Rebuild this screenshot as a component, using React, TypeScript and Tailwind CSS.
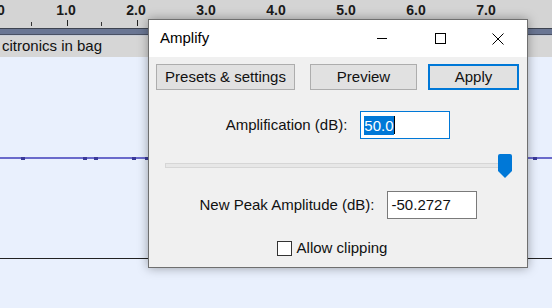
import React from 'react';

const font = { fontFamily: '"Liberation Sans", Arial, sans-serif' };

const rulerLabels = ['0', '1.0', '2.0', '3.0', '4.0', '5.0', '6.0', '7.0'];
const waveDots = [21, 83, 94, 132, 145, 533];

function Ruler() {
  return (
    <div className="h-[28px] bg-[#d4d4d4] overflow-hidden">
      <div className="flex ml-[-39px]">
        {rulerLabels.map((label, i) => (
          <div key={label} className="relative w-[70px] shrink-0 h-[28px] flex flex-col items-center">
            <span
              className={`mt-[3px] text-[14px] font-bold leading-[15px] text-[#1a1a1a] ${i === 0 ? 'ml-[10px]' : ''}`}
            >
              {label}
            </span>
            <div className="mt-auto mb-[2px] ml-[3px] w-px h-[6px] bg-[#222]" />
            <div className="absolute left-0 bottom-[2px] w-px h-[4px] bg-[#333]" />
          </div>
        ))}
        <div className="relative w-[70px] shrink-0 h-[28px]">
          <div className="absolute left-0 bottom-[2px] w-px h-[4px] bg-[#333]" />
        </div>
      </div>
    </div>
  );
}

function TitleButtons() {
  return (
    <div className="ml-auto flex h-full">
      <div className="w-[58px] flex items-center justify-center">
        <div className="w-[10px] h-px bg-black" />
      </div>
      <div className="w-[58px] flex items-center justify-center">
        <div className="w-[11px] h-[11px] border border-black" />
      </div>
      <div className="w-[58px] flex items-center justify-center">
        <svg width="12" height="12" viewBox="0 0 12 12">
          <path d="M0.5 0.5 L11.5 11.5 M11.5 0.5 L0.5 11.5" stroke="#000" strokeWidth="1" />
        </svg>
      </div>
    </div>
  );
}

function Btn({ children, w, active }: { children: React.ReactNode; w: string; active?: boolean }) {
  return (
    <button
      className={`${w} h-[26px] bg-[#e1e1e1] text-[15px] text-[#111] flex items-center justify-center ${
        active ? 'border-2 border-[#0078d7]' : 'border border-[#adadad]'
      }`}
    >
      {children}
    </button>
  );
}

function SliderThumb() {
  return (
    <svg width="14" height="24" viewBox="0 0 14 24">
      <path d="M2 0 H12 Q14 0 14 2 V17 L7 24 L0 17 V2 Q0 0 2 0 Z" fill="#0078d7" />
    </svg>
  );
}

function AmplifyDialog() {
  return (
    <div
      className="absolute left-[148px] top-[19px] w-[380px] h-[249px] border border-[#6f6f6f] bg-[#f0f0f0] flex flex-col shadow-[0_0_10px_rgba(0,0,0,0.35)]"
      style={font}
    >
      <div className="h-[37px] bg-white flex items-center shrink-0">
        <span className="pl-[11px] text-[15px] text-black">Amplify</span>
        <TitleButtons />
      </div>

      <div className="flex items-center px-[7px] mt-[7px]">
        <Btn w="w-[139px]">Presets &amp; settings</Btn>
        <div className="ml-[15px]">
          <Btn w="w-[107px]">Preview</Btn>
        </div>
        <div className="ml-[11px]">
          <Btn w="w-[91px]" active>
            Apply
          </Btn>
        </div>
      </div>

      <div className="flex items-center justify-center gap-[13px] mt-[21px]">
        <span className="text-[15px] text-[#111]">Amplification (dB):</span>
        <div className="w-[90px] h-[28px] border border-[#0078d7] bg-white flex items-center pl-[3px] text-[15px]">
          <span className="bg-[#0078d7] text-white leading-[19px]">50.0</span>
          <span className="w-px h-[18px] bg-black" />
        </div>
      </div>

      <div className="flex items-start pl-[16px] pr-[15px] mt-[15px] h-[24px]">
        <div className="flex-1 mt-[9px] h-[5px] bg-[#e7e7e7] border border-[#d6d6d6]" />
        <div className="-ml-[1px]">
          <SliderThumb />
        </div>
      </div>

      <div className="flex items-center justify-center gap-[12px] mt-[13px]">
        <span className="text-[15px] text-[#111]">New Peak Amplitude (dB):</span>
        <div className="w-[90px] h-[28px] border border-[#7a7a7a] bg-white flex items-center pl-[4px] text-[15px] text-[#111]">
          -50.2727
        </div>
      </div>

      <div className="flex items-center justify-center gap-[5px] mt-[18px] pr-[12px]">
        <div className="w-[15px] h-[15px] border border-[#333] bg-white" />
        <span className="text-[15px] text-[#111]">Allow clipping</span>
      </div>
    </div>
  );
}

export default function App() {
  return (
    <div className="relative w-[552px] h-[308px] overflow-hidden bg-[#e9f0fd]" style={font}>
      <div className="flex flex-col h-full">
        <Ruler />
        <div className="h-[7px] flex flex-col">
          <div className="h-px bg-[#3d4350]" />
          <div className="flex-1 bg-[#6a7693]" />
          <div className="h-px bg-[#4a5163]" />
        </div>
        <div className="h-[22px] bg-[#d6d6d6] flex items-center pl-[2px] text-[15px] text-[#111] border-t border-[#c9ced8]">
          citronics in bag
        </div>
        <div className="h-[202px] bg-[#e9f0fd] flex flex-col border-b border-[#222]">
          <div className="relative mt-[100px] h-[2px] bg-[#6a6acb]">
            {waveDots.map((x) => (
              <div key={x} className="absolute top-[-0.5px] h-[3px] w-[4px] bg-[#3a3a9a]" style={{ left: x }} />
            ))}
          </div>
        </div>
      </div>
      <AmplifyDialog />
    </div>
  );
}
